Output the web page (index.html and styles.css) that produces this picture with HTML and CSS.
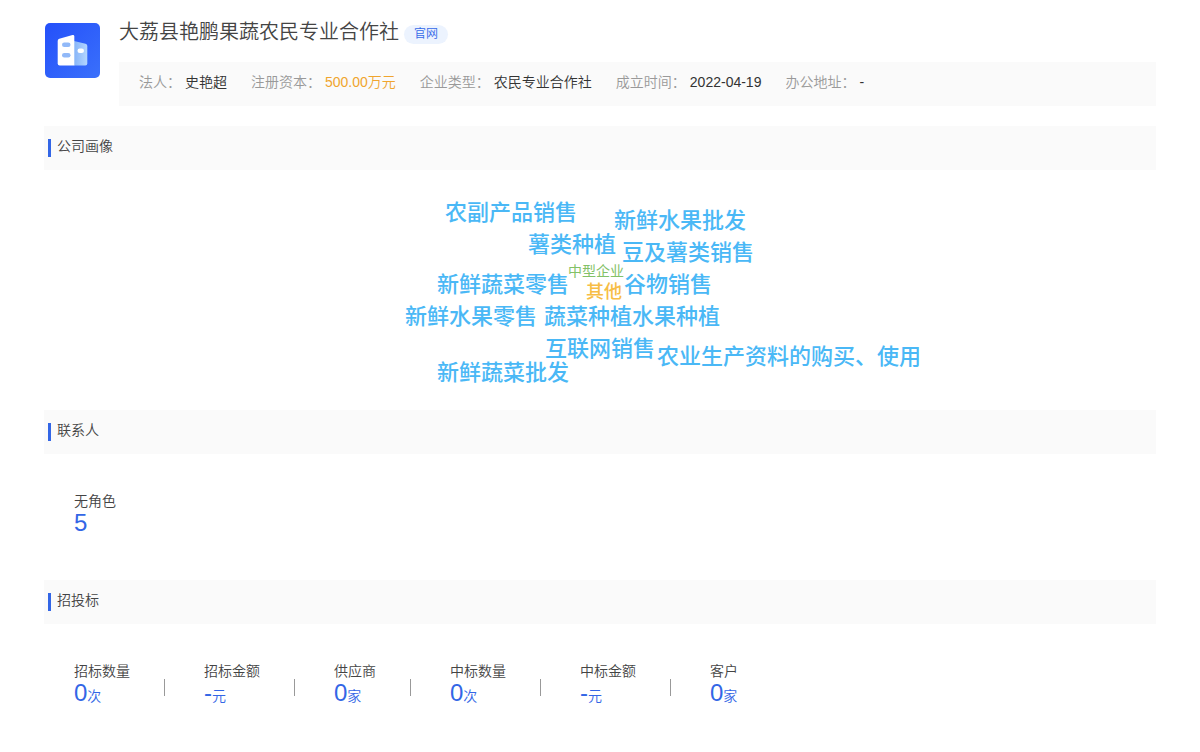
FILE: index.html
```html
<!DOCTYPE html>
<html lang="zh-CN">
<head>
<meta charset="utf-8">
<title>大荔县艳鹏果蔬农民专业合作社</title>
<link rel="stylesheet" href="styles.css">
</head>
<body>
<main class="page">
  <header class="company">
    <svg class="logo" viewBox="0 0 55 55" aria-hidden="true">
      <defs>
        <linearGradient id="logo-bg" x1="0" y1="0" x2="1" y2="1"><stop offset="0" stop-color="#2450fa"/><stop offset="1" stop-color="#3a70fb"/></linearGradient>
        <linearGradient id="logo-side" x1="0" y1="0" x2="1" y2="0"><stop offset="0" stop-color="#86b4f8"/><stop offset="1" stop-color="#b4d6ff"/></linearGradient>
      </defs>
      <rect width="55" height="55" rx="5" fill="url(#logo-bg)"/>
      <path d="M29 18L40.500 20.800Q42.300 21.300 42.300 23V40.500Q42.300 42.500 40.300 42.500H29Z" fill="url(#logo-side)"/>
      <path d="M12.700 18Q12.700 16.300 14.300 15.800L27.500 12.100Q29.300 11.700 29.300 13.500V42.500H14.700Q12.700 42.500 12.700 40.500Z" fill="#fff"/>
      <rect x="17" y="19.500" width="8.500" height="4.500" rx="2.250" fill="#91b9f8"/>
      <rect x="17" y="30" width="8.500" height="4.500" rx="2.250" fill="#91b9f8"/>
      <rect x="32.500" y="25.500" width="6.500" height="4.500" rx="2.250" fill="#fff"/>
    </svg>
    <div class="company-main">
      <div class="title-row">
        <h1 class="title">大荔县艳鹏果蔬农民专业合作社</h1>
        <a class="site-link" href="#">官网</a>
      </div>
      <dl class="facts">
        <div class="fact"><dt>法人：</dt><dd>史艳超</dd></div>
        <div class="fact"><dt>注册资本：</dt><dd class="money">500.00万元</dd></div>
        <div class="fact"><dt>企业类型：</dt><dd>农民专业合作社</dd></div>
        <div class="fact"><dt>成立时间：</dt><dd>2022-04-19</dd></div>
        <div class="fact"><dt>办公地址：</dt><dd>-</dd></div>
      </dl>
    </div>
  </header>

  <section>
    <h2 class="section-title">公司画像</h2>
    <div class="cloud">
      <span class="word" style="--x:-155px;--y:43px">农副产品销售</span>
      <span class="word" style="--x:14px;--y:51px">新鲜水果批发</span>
      <span class="word" style="--x:-72px;--y:75px">薯类种植</span>
      <span class="word" style="--x:22px;--y:83px">豆及薯类销售</span>
      <span class="word small" style="--x:-32px;--y:101px">中型企业</span>
      <span class="word" style="--x:-163px;--y:115px">新鲜蔬菜零售</span>
      <span class="word medium" style="--x:-14px;--y:122px">其他</span>
      <span class="word" style="--x:24px;--y:115px">谷物销售</span>
      <span class="word" style="--x:-195px;--y:147px">新鲜水果零售</span>
      <span class="word" style="--x:-56px;--y:147px">蔬菜种植</span>
      <span class="word" style="--x:32px;--y:147px">水果种植</span>
      <span class="word" style="--x:-55px;--y:179px">互联网销售</span>
      <span class="word" style="--x:57px;--y:187px">农业生产资料的购买、使用</span>
      <span class="word" style="--x:-163px;--y:203px">新鲜蔬菜批发</span>
    </div>
  </section>

  <section>
    <h2 class="section-title">联系人</h2>
    <dl class="stats">
      <div class="stat"><dt>无角色</dt><dd>5</dd></div>
    </dl>
  </section>

  <section>
    <h2 class="section-title">招投标</h2>
    <dl class="stats">
      <div class="stat"><dt>招标数量</dt><dd>0<small>次</small></dd></div>
      <div class="stat"><dt>招标金额</dt><dd>-<small>元</small></dd></div>
      <div class="stat"><dt>供应商</dt><dd>0<small>家</small></dd></div>
      <div class="stat"><dt>中标数量</dt><dd>0<small>次</small></dd></div>
      <div class="stat"><dt>中标金额</dt><dd>-<small>元</small></dd></div>
      <div class="stat"><dt>客户</dt><dd>0<small>家</small></dd></div>
    </dl>
  </section>
</main>
</body>
</html>
```
FILE: styles.css
```css
* {
  box-sizing: border-box;
}

body {
  margin: 0;
  background: #fff;
  color: #444;
  font: 350 14px/20px "Liberation Sans", "Noto Sans CJK SC", sans-serif;
}

h1, h2, dl, dd {
  margin: 0;
  font-weight: 350;
}

.page {
  padding: 16px 44px;
}

.company {
  display: flex;
  gap: 19px;
  margin-bottom: 20px;
}

.logo {
  flex: none;
  width: 55px;
  height: 55px;
  margin: 7px 0 0 1px;
}

.company-main {
  flex: 1;
  min-width: 0;
}

.title-row {
  display: flex;
  align-items: flex-start;
  gap: 5px;
  margin-bottom: 15px;
}

.title {
  padding-top: 1px;
  font-size: 20px;
  line-height: 30px;
}

.site-link {
  margin-top: 9px;
  padding: 0 10px;
  border-radius: 10px;
  background: #ecf3fe;
  color: #3468e8;
  font-size: 12px;
  line-height: 19px;
  text-decoration: none;
}

.facts {
  display: flex;
  flex-wrap: wrap;
  gap: 0 24px;
  padding: 10px 20px 14px;
  background: #fafafa;
}

.fact {
  display: flex;
  gap: 4px;
}

.fact dt {
  color: #999;
}

.fact dd {
  color: #333;
}

.fact .money {
  color: #f0a52e;
}

.section-title {
  display: flex;
  gap: 6px;
  padding: 10px 4px 13px;
  background: #fafafa;
  font-size: 14px;
}

.section-title::before {
  content: "";
  width: 3px;
  height: 18px;
  margin-top: 3px;
  background: #3366e6;
}

.cloud {
  position: relative;
  height: 240px;
}

.word {
  position: absolute;
  left: calc(50% + var(--x));
  top: var(--y);
  transform: translateY(-50%);
  color: #4ab8f6;
  font-size: 22px;
  font-weight: 500;
  line-height: 32px;
  white-space: nowrap;
}

.word.medium {
  color: #f7bd45;
  font-size: 18px;
}

.word.small {
  color: #83c167;
  font-size: 14px;
  font-weight: 400;
}

.stats {
  display: flex;
  flex-wrap: wrap;
  padding: 37px 30px 35px;
}

.stat {
  display: flex;
  flex-direction: column;
  position: relative;
  height: 54px;
}

.stat:not(:last-child) {
  padding-right: 35px;
  margin-right: 39px;
}

.stat:not(:last-child)::after {
  content: "";
  position: absolute;
  right: 0;
  top: 18px;
  width: 1px;
  height: 17px;
  background: #999;
}

.stat dd {
  color: #3366e6;
  font-size: 24px;
  line-height: 24px;
}

.stat small {
  font-size: 14px;
}
```
